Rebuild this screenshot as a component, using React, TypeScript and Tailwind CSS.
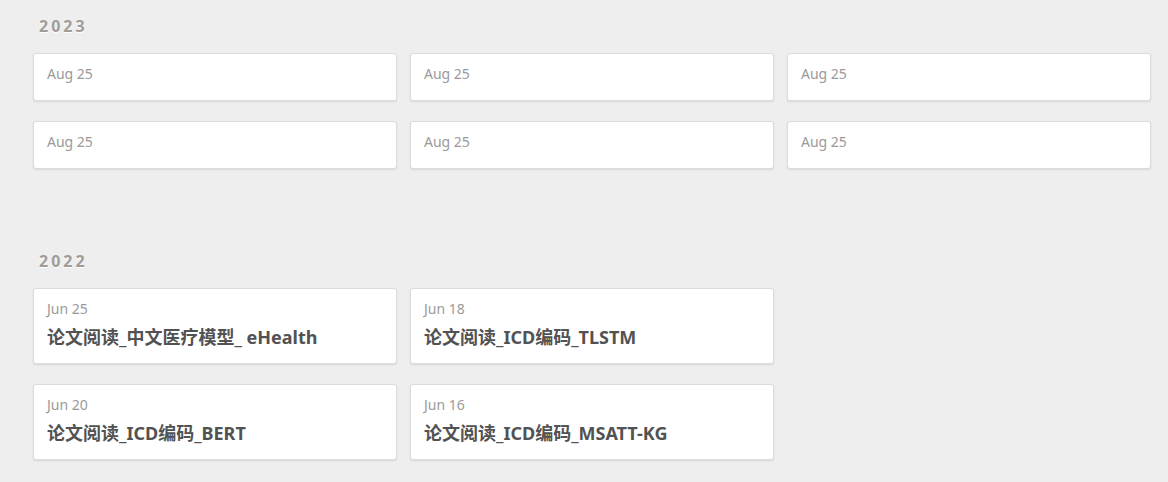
import React from "react";

type Post = { date: string; title?: string } | null;

const sections: { year: string; posts: Post[] }[] = [
  {
    year: "2023",
    posts: [
      { date: "Aug 25" },
      { date: "Aug 25" },
      { date: "Aug 25" },
      { date: "Aug 25" },
      { date: "Aug 25" },
      { date: "Aug 25" },
    ],
  },
  {
    year: "2022",
    posts: [
      { date: "Jun 25", title: "论文阅读_中文医疗模型_ eHealth" },
      { date: "Jun 18", title: "论文阅读_ICD编码_TLSTM" },
      null,
      { date: "Jun 20", title: "论文阅读_ICD编码_BERT" },
      { date: "Jun 16", title: "论文阅读_ICD编码_MSATT-KG" },
      null,
    ],
  },
];

function Card({ post }: { post: Post }) {
  if (!post) return <div />;
  return (
    <div className="rounded-[3px] border border-[#dcdcdc] bg-white px-[13px] pt-[10px] pb-[14px] shadow-[0_1px_2px_rgba(0,0,0,0.1)]">
      <div className="text-[14px] leading-5 text-[#9a9a9a]">{post.date}</div>
      {post.title ? (
        <div className="mt-[6px] text-[18px] font-bold leading-6 text-[#525252]">{post.title}</div>
      ) : (
        <div className="h-[2px]" />
      )}
    </div>
  );
}

export default function App() {
  return (
    <div
      className="min-h-[482px] w-full bg-[#eeeeee] pl-[33px] pt-[14px]"
      style={{ fontFamily: '"Noto Sans", "Noto Sans CJK SC", sans-serif' }}
    >
      {sections.map((s, i) => (
        <section key={s.year} className={i > 0 ? "mt-20" : ""}>
          <h2 className="mb-[15px] ml-[6px] h-6 text-[16px] font-bold leading-6 tracking-[3px] text-[#a19c97] [text-shadow:0_1px_0_#ffffff]">
            {s.year}
          </h2>
          <div className="grid w-[1118px] grid-cols-3 gap-x-[13px] gap-y-5">
            {s.posts.map((p, j) => (
              <Card key={j} post={p} />
            ))}
          </div>
        </section>
      ))}
    </div>
  );
}
